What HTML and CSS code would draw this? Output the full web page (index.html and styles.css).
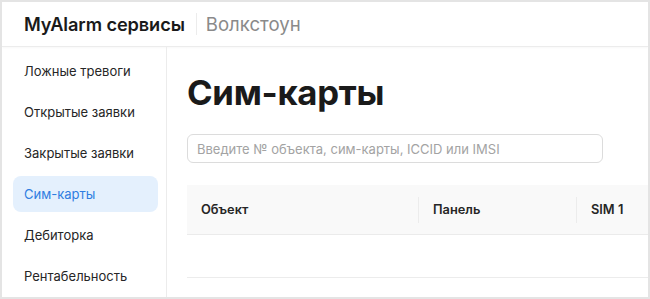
FILE: index.html
```html
<!DOCTYPE html>
<html lang="ru">
<head>
<meta charset="utf-8">
<link rel="stylesheet" href="styles.css">
</head>
<body>
<div class="frame">
  <header class="topbar">
    <span class="brand">MyAlarm сервисы</span>
    <span class="sep"></span>
    <span class="org">Волкстоун</span>
  </header>
  <div class="body">
    <nav class="sidebar">
      <a class="nav-item">Ложные тревоги</a>
      <a class="nav-item">Открытые заявки</a>
      <a class="nav-item">Закрытые заявки</a>
      <a class="nav-item active">Сим-карты</a>
      <a class="nav-item">Дебиторка</a>
      <a class="nav-item">Рентабельность</a>
    </nav>
    <main class="main">
      <h1 class="title">Сим-карты</h1>
      <div class="search">Введите № объекта, сим-карты, ICCID или IMSI</div>
      <div class="table">
        <div class="thead">
          <div class="th c1">Объект</div>
          <div class="th c2">Панель</div>
          <div class="th c3">SIM 1</div>
        </div>
        <div class="row"></div>
      </div>
    </main>
  </div>
</div>
</body>
</html>
```
FILE: styles.css
```css
* { box-sizing: border-box; }
html, body { margin: 0; padding: 0; background: #fff; }
body {
  width: 650px;
  height: 299px;
  overflow: hidden;
  font-family: Inter, "Noto Sans", sans-serif;
  color: #1f1f1f;
}
.frame {
  width: 650px;
  height: 299px;
  border: 2px solid #e4e4e4;
  display: flex;
  flex-direction: column;
  overflow: hidden;
}
.topbar {
  height: 45px;
  flex: none;
  display: flex;
  align-items: center;
  padding-left: 22px;
  border-bottom: 1px solid #ececec;
  box-shadow: 0 1px 2px rgba(0,0,0,0.03);
}
.brand {
  font-size: 18.2px;
  font-weight: 600;
  letter-spacing: -0.1px;
  color: #1a1a1a;
}
.sep {
  width: 1px;
  height: 22px;
  background: #ececec;
  margin: 0 9px 0 11px;
}
.org {
  font-size: 18.6px;
  color: #8a8a8a;
}
.body {
  flex: 1;
  display: flex;
  min-height: 0;
}
.sidebar {
  width: 165px;
  flex: none;
  border-right: 1px solid #ececec;
  padding: 6px 8px 0 11px;
  display: flex;
  flex-direction: column;
  gap: 5px;
}
.nav-item {
  height: 36px;
  display: flex;
  align-items: center;
  padding-left: 11px;
  font-size: 13px;
  color: #262626;
  border-radius: 8px;
}
.nav-item.active {
  background: #e4f0fd;
  color: #2f7de1;
}
.main {
  flex: 1;
  padding-left: 20px;
  min-width: 0;
}
.title {
  margin: 24px 0 0 0;
  font-size: 34.7px;
  line-height: 42px;
  font-weight: 700;
  letter-spacing: -0.3px;
  color: #1a1a1a;
}
.search {
  margin-top: 21px;
  width: 416px;
  height: 29px;
  border: 1px solid #dcdcdc;
  border-radius: 6px;
  display: flex;
  align-items: center;
  padding-left: 9px;
  font-size: 13px;
  color: #a3a3a3;
}
.table {
  margin-top: 22px;
}
.thead {
  height: 50px;
  background: #f9f9f9;
  border-bottom: 1px solid #ebebeb;
  display: flex;
  align-items: center;
}
.th {
  font-size: 12.8px;
  font-weight: 600;
  color: #262626;
  padding-left: 14px;
  height: 26px;
  display: flex;
  align-items: center;
}
.c1 { width: 231px; }
.c2 { width: 158px; border-left: 1px solid #ececec; }
.c3 { flex: 1; border-left: 1px solid #ececec; }
.row {
  height: 43px;
  border-bottom: 1px solid #ececec;
}
```
